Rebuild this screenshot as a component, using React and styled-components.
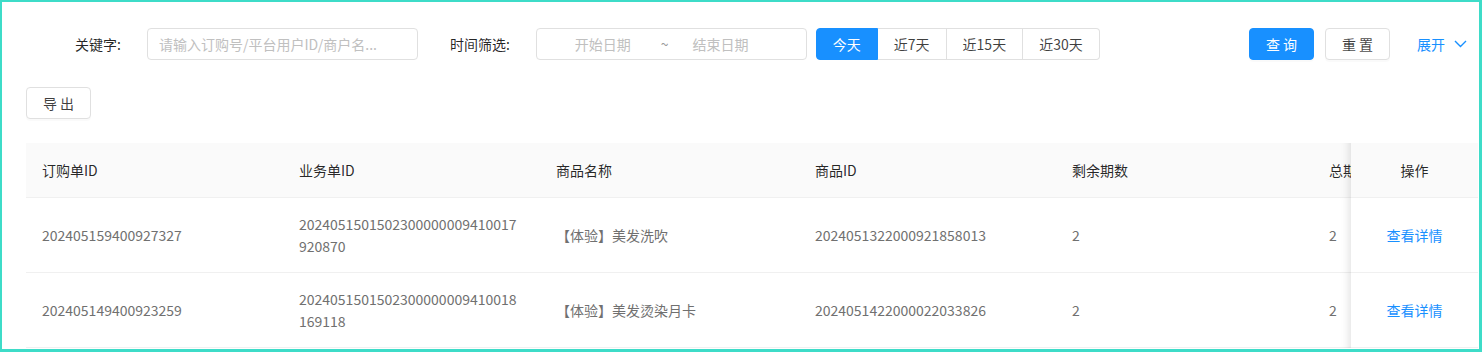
import React from "react";
import styled, { createGlobalStyle } from "styled-components";

const GlobalStyle = createGlobalStyle`
  * {
    box-sizing: border-box;
  }

  body {
    margin: 0;
    background: #ffffff;
    font-family: "Noto Sans CJK SC", "Noto Sans", sans-serif;
    font-size: 14px;
    color: rgba(0, 0, 0, 0.85);
  }
`;

const columns = [
  { key: "orderId", title: "订购单ID", width: 257 },
  { key: "bizId", title: "业务单ID", width: 257 },
  { key: "name", title: "商品名称", width: 259 },
  { key: "goodsId", title: "商品ID", width: 257 },
  { key: "left", title: "剩余期数", width: 257 },
  { key: "total", title: "总期数", width: 257 },
];

const rows = [
  {
    orderId: "202405159400927327",
    bizId: "2024051501502300000009410017920870",
    name: "【体验】美发洗吹",
    goodsId: "2024051322000921858013",
    left: "2",
    total: "2",
  },
  {
    orderId: "202405149400923259",
    bizId: "2024051501502300000009410018169118",
    name: "【体验】美发烫染月卡",
    goodsId: "2024051422000022033826",
    left: "2",
    total: "2",
  },
];

const ranges = ["今天", "近7天", "近15天", "近30天"];

export default function App() {
  return (
    <>
      <GlobalStyle />
      <Frame>
        <SearchBar>
          <Label>关键字:</Label>
          <Input placeholder="请输入订购号/平台用户ID/商户名..." />
          <Label $gap>时间筛选:</Label>
          <DateRange>
            <span>开始日期</span>
            <Tilde>~</Tilde>
            <span>结束日期</span>
          </DateRange>
          <RangeGroup>
            {ranges.map((r, i) => (
              <RangeButton key={r} $active={i === 0}>
                {r}
              </RangeButton>
            ))}
          </RangeGroup>
          <Actions>
            <Button $primary>查 询</Button>
            <Button>重 置</Button>
            <Expand>
              展开
              <svg width="13" height="8" viewBox="0 0 13 8">
                <polyline
                  points="1,1 6.5,6.5 12,1"
                  fill="none"
                  stroke="#1890ff"
                  strokeWidth="1.4"
                />
              </svg>
            </Expand>
          </Actions>
        </SearchBar>

        <Toolbar>
          <Button>导 出</Button>
        </Toolbar>

        <TableWrap>
          <Table>
            <colgroup>
              {columns.map((c) => (
                <col key={c.key} style={{ width: c.width }} />
              ))}
              <col style={{ width: 127 }} />
            </colgroup>
            <thead>
              <tr>
                {columns.map((c) => (
                  <Th key={c.key}>{c.title}</Th>
                ))}
                <FixedTh>操作</FixedTh>
              </tr>
            </thead>
            <tbody>
              {rows.map((row) => (
                <tr key={row.orderId}>
                  {columns.map((c) => (
                    <Td key={c.key}>{row[c.key]}</Td>
                  ))}
                  <FixedTd>
                    <Link>查看详情</Link>
                  </FixedTd>
                </tr>
              ))}
            </tbody>
          </Table>
        </TableWrap>
      </Frame>
    </>
  );
}

const Frame = styled.div`
  width: 1482px;
  height: 352px;
  border-style: solid;
  border-color: #3edcc8;
  border-width: 2px 3px 3px 2px;
  padding: 26px 0 0 24px;
  overflow: hidden;
`;

const SearchBar = styled.div`
  display: flex;
  align-items: center;
  height: 32px;
  padding-left: 49px;
  padding-right: 12px;
`;

const Label = styled.label`
  margin-left: ${({ $gap }) => ($gap ? "32px" : "0")};
  margin-right: 26px;
  color: rgba(0, 0, 0, 0.85);
  white-space: nowrap;
`;

const Input = styled.input`
  width: 271px;
  height: 32px;
  padding: 4px 11px;
  border: 1px solid #e0e0e0;
  border-radius: 4px;
  font-family: inherit;
  font-size: 14px;
  outline: none;

  &::placeholder {
    color: #c0c0c0;
  }
`;

const DateRange = styled.div`
  display: flex;
  align-items: center;
  width: 271px;
  height: 32px;
  padding-left: 38px;
  border: 1px solid #e0e0e0;
  border-radius: 4px;
  color: #c0c0c0;
`;

const Tilde = styled.span`
  margin: 0 24px 0 30px;
  color: #999999;
`;

const RangeGroup = styled.div`
  display: flex;
  margin-left: 9px;
`;

const RangeButton = styled.div`
  display: flex;
  align-items: center;
  justify-content: center;
  height: 32px;
  padding: 0 16px;
  min-width: 62px;
  border: 1px solid ${({ $active }) => ($active ? "#1890ff" : "#e0e0e0")};
  border-left-width: ${({ $active }) => ($active ? "1px" : "0")};
  background: ${({ $active }) => ($active ? "#1890ff" : "#ffffff")};
  color: ${({ $active }) => ($active ? "#ffffff" : "rgba(0, 0, 0, 0.75)")};
  white-space: nowrap;

  &:first-child {
    border-radius: 4px 0 0 4px;
  }

  &:last-child {
    border-radius: 0 4px 4px 0;
  }
`;

const Actions = styled.div`
  display: flex;
  align-items: center;
  margin-left: auto;
  gap: 11px;
`;

const Button = styled.button`
  height: 32px;
  min-width: 65px;
  padding: 0 15px;
  border: 1px solid ${({ $primary }) => ($primary ? "#1890ff" : "#e0e0e0")};
  border-radius: 4px;
  background: ${({ $primary }) => ($primary ? "#1890ff" : "#ffffff")};
  color: ${({ $primary }) => ($primary ? "#ffffff" : "rgba(0, 0, 0, 0.75)")};
  font-family: inherit;
  font-size: 14px;
  white-space: pre;
  box-shadow: 0 2px 0 rgba(0, 0, 0, 0.02);
`;

const Expand = styled.a`
  display: flex;
  align-items: center;
  gap: 9px;
  margin-left: 16px;
  color: #1890ff;
`;

const Toolbar = styled.div`
  display: flex;
  margin-top: 27px;
`;

const TableWrap = styled.div`
  margin-top: 24px;
  width: 1452px;
  overflow: hidden;
`;

const Table = styled.table`
  width: 1669px;
  table-layout: fixed;
  border-collapse: collapse;
  border-spacing: 0;
`;

const Th = styled.th`
  height: 54px;
  padding: 0 16px;
  background: #fafafa;
  border-bottom: 1px solid #f0f0f0;
  color: rgba(0, 0, 0, 0.85);
  font-weight: 400;
  text-align: left;
  white-space: nowrap;
  overflow: hidden;
`;

const Td = styled.td`
  height: 75px;
  padding: 0 16px;
  border-bottom: 1px solid #f0f0f0;
  color: #707070;
  line-height: 22px;
  word-break: break-all;
  vertical-align: middle;
`;

const FixedTh = styled(Th)`
  position: sticky;
  right: 0;
  text-align: center;
  overflow: visible;

  &::before {
    content: "";
    position: absolute;
    top: 0;
    bottom: -1px;
    left: -12px;
    width: 12px;
    box-shadow: inset -10px 0 8px -8px rgba(0, 0, 0, 0.12);
  }
`;

const FixedTd = styled(Td)`
  position: sticky;
  right: 0;
  background: #ffffff;
  text-align: center;

  &::before {
    content: "";
    position: absolute;
    top: 0;
    bottom: -1px;
    left: -12px;
    width: 12px;
    box-shadow: inset -10px 0 8px -8px rgba(0, 0, 0, 0.12);
  }
`;

const Link = styled.a`
  color: #1890ff;
  cursor: pointer;
`;
